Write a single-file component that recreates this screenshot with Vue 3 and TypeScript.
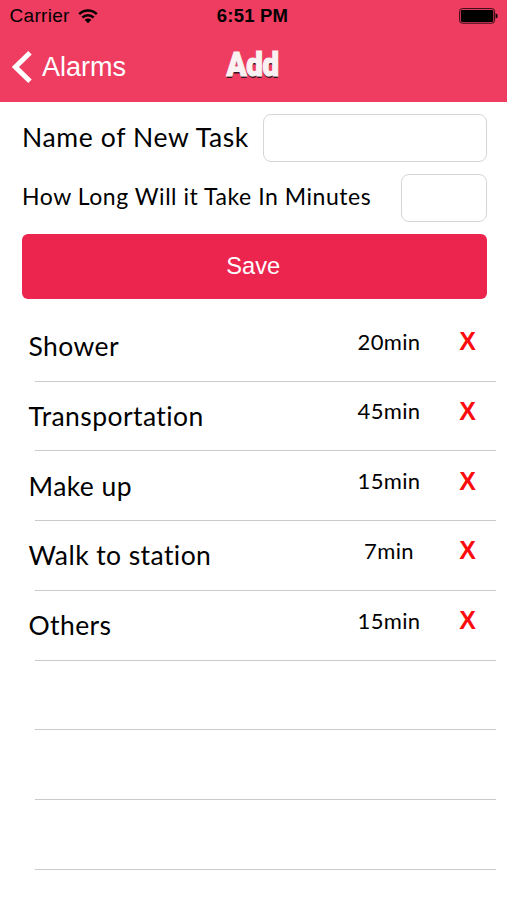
<script setup lang="ts">
import { ref } from 'vue'

interface Task {
  name: string
  minutes: number
}

const taskName = ref('')
const taskMinutes = ref('')
const tasks = ref<Task[]>([
  { name: 'Shower', minutes: 20 },
  { name: 'Transportation', minutes: 45 },
  { name: 'Make up', minutes: 15 },
  { name: 'Walk to station', minutes: 7 },
  { name: 'Others', minutes: 15 },
])
const emptyRows = 3

function save(): void {
  const minutes = Number(taskMinutes.value)
  if (!taskName.value || !minutes) return
  tasks.value.push({ name: taskName.value, minutes })
  taskName.value = ''
  taskMinutes.value = ''
}

function remove(index: number): void {
  tasks.value.splice(index, 1)
}
</script>

<template>
  <main class="screen">
    <header class="header">
      <div class="status">
        <div class="carrier">
          <span>Carrier</span>
          <svg class="wifi" width="20" height="15" viewBox="0 0 20 15">
            <path d="M1.2 5.2C6.2.4 13.8.4 18.8 5.2" />
            <path d="M4.4 8.5C7.6 5.4 12.4 5.4 15.6 8.5" />
            <path class="dot" d="M6.7 10.8Q10 8.1 13.3 10.8L10 14.2Z" />
          </svg>
        </div>
        <span class="time">6:51 PM</span>
        <svg class="battery" width="39" height="16" viewBox="0 0 39 16">
          <rect class="case" x=".6" y=".6" width="35" height="14.6" rx="2.8" />
          <rect x="1.9" y="1.9" width="32.4" height="12" rx="1.4" />
          <path d="M36.6 5.2Q38.7 5.8 38.7 7.9T36.6 10.6Z" />
        </svg>
      </div>
      <nav class="nav">
        <a class="back">
          <svg class="chevron" width="20" height="32" viewBox="0 0 20 32">
            <path d="M18 1.8L3.4 16L18 30.2" />
          </svg>
          <span>Alarms</span>
        </a>
        <h1 class="title">Add</h1>
      </nav>
    </header>

    <form class="form" @submit.prevent="save">
      <label class="field">
        <span class="name-label">Name of New Task</span>
        <input v-model="taskName" class="input name-input" type="text" />
      </label>
      <label class="field">
        <span class="minutes-label">How Long Will it Take In Minutes</span>
        <input v-model="taskMinutes" class="input minutes-input" type="text" />
      </label>
      <button class="save" type="submit">Save</button>
    </form>

    <ul class="list">
      <li v-for="(task, i) in tasks" :key="i" class="row">
        <span class="name">{{ task.name }}</span>
        <span class="minutes">{{ task.minutes }}min</span>
        <button class="remove" type="button" @click="remove(i)">X</button>
      </li>
      <li v-for="n in emptyRows" :key="'empty' + n" class="row"></li>
    </ul>
  </main>
</template>

<style>
body {
  background: #fff;
}
</style>

<style scoped>
.screen {
  width: 507px;
  height: 900px;
  overflow: hidden;
  background: #fff;
  color: #000;
  font-family: Lato, sans-serif;
}
.header {
  height: 101.5px;
  background: #ee3d61;
  font-family: 'Liberation Sans', sans-serif;
}
.status {
  display: grid;
  grid-template-columns: 1fr auto 1fr;
  align-items: center;
  height: 32px;
  padding: 0 10px 0 9px;
  font-size: 19px;
}
.carrier {
  display: flex;
  align-items: center;
  gap: 8px;
  padding-left: 0.5px;
  letter-spacing: 0.3px;
}
.wifi {
  fill: none;
  stroke: #000;
  stroke-width: 2.5;
}
.wifi .dot {
  fill: #000;
  stroke: none;
}
.time {
  margin-right: 1px;
  font-weight: 700;
  font-size: 18.5px;
  letter-spacing: 0.2px;
}
.battery {
  justify-self: end;
  margin-right: -1px;
}
.case {
  fill: none;
  stroke: #000;
  stroke-width: 0.8;
}
.nav {
  display: grid;
  grid-template-columns: 1fr auto 1fr;
  align-items: center;
  height: 70px;
  padding: 0 13px 0 12px;
  color: #fff;
}
.back {
  display: flex;
  align-items: center;
  gap: 10px;
  font-size: 27px;
}
.chevron {
  fill: none;
  stroke: #fff;
  stroke-width: 5;
}
.title {
  margin: 0;
  padding-bottom: 4px;
  font: 900 33.5px/40px Roboto, sans-serif;
  letter-spacing: -0.4px;
  color: #faf2f2;
  -webkit-text-stroke: 1.2px #faf2f2;
  text-shadow: 0 1.5px 0 #3a1520;
  transform: scaleX(0.88);
}
.form {
  display: flex;
  flex-direction: column;
  gap: 12.5px;
  padding: 12.5px 20.5px 0 22px;
}
.field {
  display: flex;
  align-items: center;
  justify-content: space-between;
  height: 47.5px;
  white-space: nowrap;
}
.name-label {
  padding-bottom: 2px;
  font-size: 26.5px;
  letter-spacing: 0.65px;
}
.minutes-label {
  padding-bottom: 3px;
  font-size: 23px;
  letter-spacing: 0.54px;
}
.input {
  box-sizing: border-box;
  height: 48px;
  padding: 0 10px;
  border: 1px solid #d6d6d6;
  border-radius: 8px;
  outline: none;
  background: #fff;
  font: 24px Lato, sans-serif;
}
.name-input {
  width: 224px;
}
.minutes-input {
  width: 86px;
}
.save {
  height: 65px;
  padding: 0 2px 0 0;
  border: 0;
  border-radius: 6px;
  background: #ec254f;
  color: #fff;
  font: 23.7px 'Liberation Sans', sans-serif;
}
.list {
  margin: 12.8px 0 0;
  padding: 0 11px 0 28px;
  list-style: none;
}
.row {
  display: grid;
  grid-template-columns: 1fr 100px 57px;
  align-items: center;
  box-sizing: border-box;
  height: 69.75px;
  background: linear-gradient(#cacaca, #cacaca) 7px 100% / 100% 1px no-repeat;
}
.name {
  padding: 0 0 1px 0.5px;
  font-size: 26.5px;
  letter-spacing: 0.42px;
}
.minutes {
  padding-bottom: 11px;
  font-size: 22px;
  letter-spacing: 0.35px;
  text-align: center;
}
.remove {
  padding: 0 0 10px;
  border: 0;
  background: none;
  color: #fb0d0d;
  font: 700 25px 'Liberation Sans', sans-serif;
}
</style>
